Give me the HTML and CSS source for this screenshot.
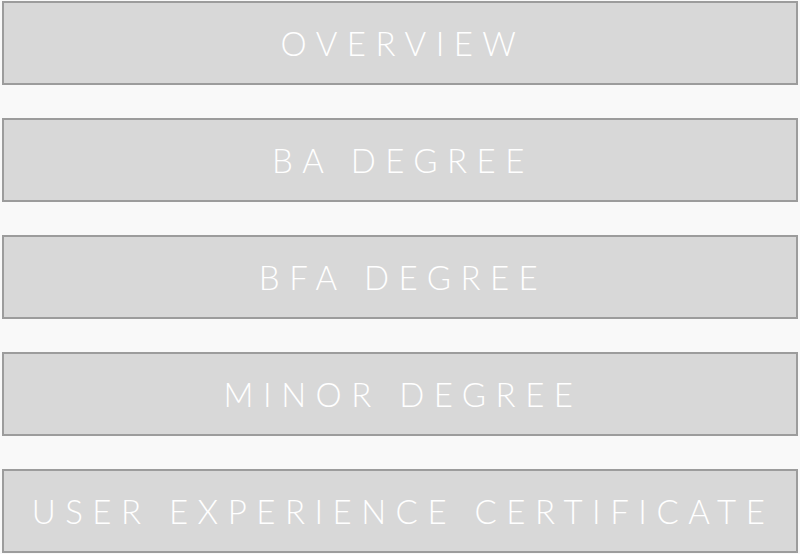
FILE: index.html
```html
<!DOCTYPE html>
<html>
<head>
<meta charset="utf-8">
<link rel="stylesheet" href="styles.css">
</head>
<body>
<nav class="menu">
  <a class="item" href="#">OVERVIEW</a>
  <a class="item" href="#">BA DEGREE</a>
  <a class="item" href="#">BFA DEGREE</a>
  <a class="item" href="#">MINOR DEGREE</a>
  <a class="item" href="#">USER EXPERIENCE CERTIFICATE</a>
</nav>
</body>
</html>
```

FILE: styles.css
```css
html, body {
  margin: 0;
  padding: 0;
  background: #f9f9f9;
}
.menu {
  display: flex;
  flex-direction: column;
  gap: 33px;
  padding: 1px 2px 0 2px;
}
.item {
  box-sizing: border-box;
  height: 84px;
  display: flex;
  align-items: center;
  justify-content: center;
  background: #d8d8d8;
  border: 2px solid #9c9c9c;
  color: #ffffff;
  text-decoration: none;
  font-family: Lato, "Open Sans", sans-serif;
  font-weight: 300;
  font-size: 33px;
  letter-spacing: 9.5px;
  padding-left: 6px;
}
```
